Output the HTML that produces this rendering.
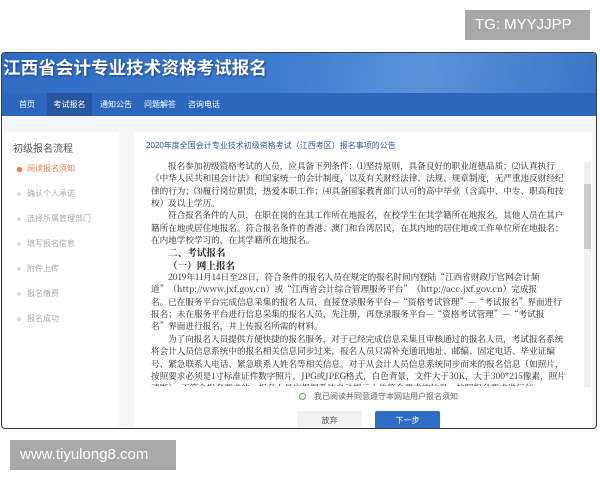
<!DOCTYPE html>
<html><head><meta charset="utf-8"><style>
*{margin:0;padding:0;box-sizing:border-box}
body{width:600px;height:480px;background:#fff;position:relative;overflow:hidden;font-family:"Liberation Sans","Noto Sans CJK SC",sans-serif}
.badge{position:absolute;background:#a8a8a8;color:#fff;font-size:15px;line-height:30px;padding:0 10px}
.frame{position:absolute;left:1px;top:52px;width:596px;height:377px;border:1.5px solid #3a3a3a;border-radius:4px;overflow:hidden;background:#f4f5f7}
.hdr{position:absolute;left:0;top:0;width:100%;height:63px;background:linear-gradient(100deg,#2f6cc4 0%,#3b7bd0 45%,#5a93d8 70%,#3a74c6 100%)}
.title{position:absolute;left:1px;top:2px;color:#fff;font-size:17.6px;font-weight:bold;text-shadow:1px 1px 2px #1a3d7a;font-family:"Noto Sans CJK SC",sans-serif}
.nav{position:absolute;left:0;top:40px;width:100%;height:23px;background:#2c67bd}
.nav span{position:absolute;top:0;line-height:23px;color:#fff;font-size:8px}
.nav .act{background:#25579f;width:45px;text-align:center}
.left{position:absolute;left:1px;top:79px;width:116px;height:300px;background:#fff}
.left h4{position:absolute;left:10px;top:8px;font-size:10px;color:#555;font-weight:normal}
.st{position:absolute;left:24px;font-size:8px;color:#aaa}
.st:before{content:"";position:absolute;left:-10px;top:4px;width:4px;height:4px;border-radius:2px;background:#ddd}
.st.on{color:#e8824a}.st.on:before{background:#e8824a;width:5px;height:5px}
.main{position:absolute;left:132px;top:79px;width:458px;height:300px;background:#fff}
.mt{position:absolute;left:12px;top:8px;font-size:8px;color:#2a5aa8}
.txt{position:absolute;left:17px;top:28px;width:418px;height:226px;overflow:hidden;font-family:"Noto Serif CJK SC","Liberation Serif",serif;font-size:8.6px;color:#222;line-height:12.35px}
.txt div{white-space:nowrap}
.i{padding-left:17px}
.b{font-weight:bold;font-size:9.6px}
.sb{position:absolute;left:450px;top:30px;width:7px;height:225px;background:#f0f0f0}
.sb i{position:absolute;left:0;top:22px;width:7px;height:65px;background:#c8c8c8}
.rad{position:absolute;left:165px;top:259px;font-size:8px;color:#666}
.rad b{display:inline-block;width:7px;height:7px;border:1px solid #5aaa5a;border-radius:50%;margin-right:8px;vertical-align:-1px}
.btn{position:absolute;top:279px;width:65px;height:20px;font-size:8px;text-align:center;line-height:20px}
</style></head><body>
<div class="badge" style="left:465px;top:10px;width:125px">TG: MYYJJPP</div>
<div class="frame">
<div class="hdr"><div class="title">江西省会计专业技术资格考试报名</div>
<div class="nav"><span style="left:17px">首页</span><span class="act" style="left:45px">考试报名</span><span style="left:98px">通知公告</span><span style="left:142px">问题解答</span><span style="left:186px">咨询电话</span></div></div>
<div class="left"><h4>初级报名流程</h4>
<div class="st on" style="top:31px">阅读报名须知</div>
<div class="st" style="top:56px">确认个人承诺</div>
<div class="st" style="top:81px">选择所属管理部门</div>
<div class="st" style="top:106px">填写报名信息</div>
<div class="st" style="top:131px">附件上传</div>
<div class="st" style="top:156px">报名缴费</div>
<div class="st" style="top:181px">报名成功</div>
</div>
<div class="main"><div class="mt">2020年度全国会计专业技术初级资格考试（江西考区）报名事项的公告</div>
<div class="txt">
<div class="i">报名参加初级资格考试的人员，应具备下列条件：⑴坚持原则，具备良好的职业道德品质；⑵认真执行</div>
<div>《中华人民共和国会计法》和国家统一的会计制度，以及有关财经法律、法规、规章制度，无严重违反财经纪</div>
<div>律的行为；⑶履行岗位职责，热爱本职工作；⑷具备国家教育部门认可的高中毕业（含高中、中专、职高和技</div>
<div>校）及以上学历。</div>
<div class="i">符合报名条件的人员，在职在岗的在其工作所在地报名，在校学生在其学籍所在地报名，其他人员在其户</div>
<div>籍所在地或居住地报名。符合报名条件的香港、澳门和台湾居民，在其内地的居住地或工作单位所在地报名；</div>
<div>在内地学校学习的，在其学籍所在地报名。</div>
<div class="i b">二、考试报名</div>
<div class="i b">（一）网上报名</div>
<div class="i">2019年11月14日至28日，符合条件的报名人员在规定的报名时间内登陆“江西省财政厅官网会计频</div>
<div>道”（http://www.jxf.gov.cn）或“江西省会计综合管理服务平台”（http://acc.jxf.gov.cn）完成报</div>
<div>名。已在服务平台完成信息采集的报名人员，直接登录服务平台—“资格考试管理”—“考试报名”界面进行</div>
<div>报名；未在服务平台进行信息采集的报名人员，先注册，再登录服务平台—“资格考试管理”—“考试报</div>
<div>名”界面进行报名，并上传报名所需的材料。</div>
<div class="i">为了向报名人员提供方便快捷的报名服务，对于已经完成信息采集且审核通过的报名人员，考试报名系统</div>
<div>将会计人员信息系统中的报名相关信息同步过来，报名人员只需补充通讯地址、邮编、固定电话、毕业证编</div>
<div>号、紧急联系人电话、紧急联系人姓名等相关信息。对于从会计人员信息系统同步而来的报名信息（如照片，</div>
<div>按照要求必须是1寸标准证件数字照片，JPG或JPEG格式，白色背景，文件大于30K，大于300*215像素，照片</div>
<div>清晰），不符合报名要求的，报名人员应根据系统自动提示上传符合要求的信息，按照报名要求进行信</div>
</div>
<div class="sb"><i></i></div>
<div class="rad"><b></b>我已阅读并同意遵守本网站用户报名须知</div>
<div class="btn" style="left:163px;background:#f2f2f2;color:#555">放弃</div>
<div class="btn" style="left:241px;background:#2f6cc4;color:#fff;border-radius:2px">下一步</div>
</div>
</div>
<div class="badge" style="left:10px;top:440px;width:166px">www.tiyulong8.com</div>
</body></html>
